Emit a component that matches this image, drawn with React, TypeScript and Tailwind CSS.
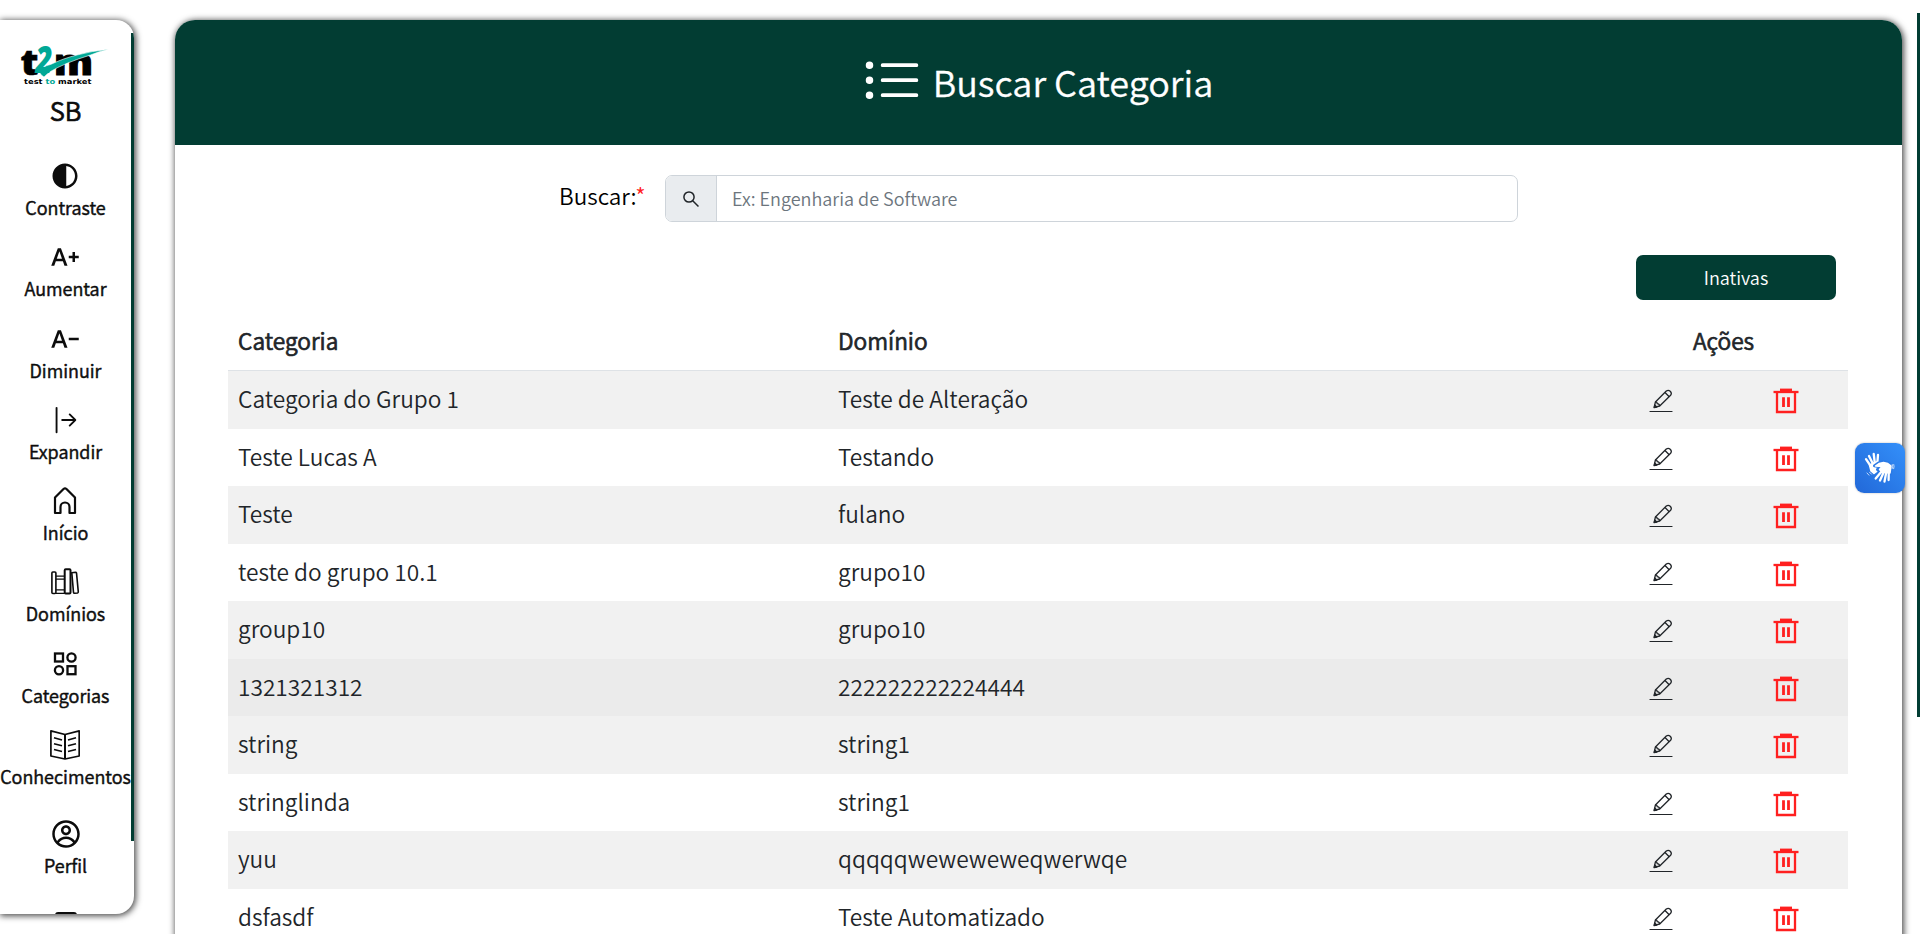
import type { ReactNode } from "react";
import { BsArrowBarRight, BsListUl } from "react-icons/bs";
import { MdContrast, MdTextDecrease, MdTextIncrease } from "react-icons/md";
import { CgProfile } from "react-icons/cg";

const rows: [string, string][] = [
  ["Categoria do Grupo 1", "Teste de Alteração"],
  ["Teste Lucas A", "Testando"],
  ["Teste", "fulano"],
  ["teste do grupo 10.1", "grupo10"],
  ["group10", "grupo10"],
  ["1321321312", "222222222224444"],
  ["string", "string1"],
  ["stringlinda", "string1"],
  ["yuu", "qqqqqweweweweqwerwqe"],
  ["dsfasdf", "Teste Automatizado"],
];

function Logo() {
  return (
    <svg width="92" height="42" viewBox="0 0 92 42" className="block overflow-visible">
      <text x="-0.500" y="29.500" fontFamily="Open Sans" fontWeight="800" fontSize="36" textLength="18" lengthAdjust="spacingAndGlyphs" fill="#000" stroke="#000" strokeWidth="0.6">t</text>
      <text x="33" y="29.500" fontFamily="Open Sans" fontWeight="800" fontSize="35" textLength="39" lengthAdjust="spacingAndGlyphs" fill="#000" stroke="#000" strokeWidth="1">m</text>
      <path d="M18.500 27.500 C21 23 24 20.500 29.500 19.500 C38 15.500 46 12.500 56 10 Q71 6 87.800 4.300 Q77 6.800 69.500 10 Q57 13.800 46 18.300 Q36 22.500 29.500 26.500 Q26 29 23 32 Q20.500 31 18.500 27.500Z" fill="#00a896" stroke="#fff" strokeWidth="0.600" />
      <text x="14.500" y="28" fontFamily="Open Sans" fontWeight="800" fontSize="37" fontStyle="italic" textLength="17" lengthAdjust="spacingAndGlyphs" fill="#00a896">2</text>
      <text x="3" y="39" fontFamily="DejaVu Sans" fontWeight="700" fontSize="7" textLength="67.500" lengthAdjust="spacingAndGlyphs" fill="#000">
        test <tspan fill="#00a896">to</tspan> market
      </text>
    </svg>
  );
}

function HomeIcon() {
  return (
    <svg width="30" height="30" viewBox="0 0 30 30" fill="none" stroke="currentColor" strokeWidth="2.200" strokeLinejoin="round">
      <path d="M5 11.500 L13.500 3 Q15 1.800 16.500 3 L25 11.500 V27 H19.500 V21 A4.500 4.500 0 0 0 10.500 21 V27 H5Z" />
    </svg>
  );
}

function BooksIcon() {
  return (
    <svg width="30" height="30" viewBox="0 0 30 30" fill="none" stroke="currentColor" strokeWidth="1.600">
      <rect x="1.900" y="5" width="4" height="21.500" rx="1" />
      <path d="M5.900 9.200H14.500M5.900 12.200H14.500M5.900 22.800H14.500M5.900 26.300H14.500" strokeWidth="1.300" />
      <rect x="14.700" y="2.200" width="5.800" height="24.300" rx="1" strokeWidth="2" />
      <path d="M21.800 5.800 L25.500 5.200 Q26.300 5.200 26.500 6 L28.300 24.800 Q28.300 25.800 27.500 26 L24.600 26.300 Q23.600 26.300 23.500 25.300Z" />
    </svg>
  );
}

function CategoriesIcon() {
  return (
    <svg width="30" height="30" viewBox="0 0 30 30" fill="none" stroke="currentColor" strokeWidth="2.300">
      <rect x="5" y="4.500" width="8" height="8" />
      <circle cx="21.500" cy="8.500" r="4.100" />
      <circle cx="9" cy="21.200" r="4.100" />
      <rect x="17.500" y="17.200" width="8" height="8" />
    </svg>
  );
}

function OpenBookIcon() {
  return (
    <svg width="30" height="30" viewBox="0 0 30 30" fill="none" stroke="currentColor" strokeWidth="1.700" strokeLinejoin="round">
      <path d="M15 4.500 L0.900 0.900 V26 L15 29 L29.200 26 V0.900Z" />
      <path d="M15 4.500V29" strokeWidth="2" />
      <path d="M4 7.700L12 10M4 13.700L12 15.800M4 19.500L12 21.500M26 7.700L18 10M26 13.700L18 15.800M26 19.500L18 21.500" />
    </svg>
  );
}

function EditIcon() {
  return (
    <svg width="24" height="24" viewBox="0 0 24 24" fill="none" stroke="currentColor" strokeWidth="1.300" strokeLinejoin="round">
      <path d="M1 22.500H23" strokeWidth="1.200" strokeLinecap="round" />
      <path d="M5.200 18.400 L6.400 13 L17.300 2 Q19.300 0.600 21.200 2.200 Q23.200 4.200 21.600 6.300 L10.700 17Z" />
      <path d="M16 3.500L20.200 7.700M6.400 13 Q8 12.800 8.200 14.700 Q10.300 14.700 10.700 17" />
      <path d="M5.700 16L7.800 18L5.200 18.600Z" fill="currentColor" />
    </svg>
  );
}

function TrashIcon() {
  return (
    <svg width="26" height="26" viewBox="0 0 26 26" fill="none" stroke="#ff2020" strokeWidth="2">
      <path d="M7 2H19" strokeWidth="2.800" />
      <path d="M0.500 4H25.500" strokeWidth="2.300" />
      <path d="M4 4V24H22V4" strokeWidth="2.300" />
      <path d="M10.500 9.300V19M15.500 9.300V19" strokeWidth="2.800" />
    </svg>
  );
}

function SearchIcon() {
  return (
    <svg width="18" height="18" viewBox="0 0 18 18" fill="none" stroke="#212529" strokeWidth="1.500">
      <circle cx="7" cy="7" r="5.100" />
      <path d="M10.700 10.700L16.500 16.500" />
    </svg>
  );
}

function SignHandsIcon() {
  return (
    <svg width="50" height="50" viewBox="0 0 50 50" fill="none" stroke="#fff" strokeLinecap="round" strokeLinejoin="round">
      <path d="M11 16.200L16 23.500M14 13L18 21M18.700 10.800L19.800 20M23 11.800L22.300 20.500" strokeWidth="2.300" />
      <path d="M14.500 22 L22.500 18.500 L24 22 L23 27.500 L19 30.500 L16 28Z" fill="#fff" strokeWidth="1.500" />
      <path d="M19.500 22.800 Q23 19.500 28 18.800 Q33 19 36.500 22.500 L35.500 31 L26 29.500 L22.500 26.500 L26 24Z" fill="#2b7ae6" stroke="#2b7ae6" strokeWidth="3" />
      <path d="M20.500 23 Q24 20 28.500 19.600 Q33 20 36 23 L35 30 L27 29 L24.500 26.500 L27 23.500Z" fill="#fff" strokeWidth="1.500" />
      <path d="M27 28L20.700 35.500M29 28.500L25 37.500M31.300 29L29.500 38.500M33.800 28.500L33.600 37" strokeWidth="2.300" />
      <path d="M37.300 21.500Q38 23.500 37.300 25.500M38.800 21.500Q39.500 23.500 38.700 25.700M12 30L14 32.200M14.500 29.200L16.500 31.200" strokeWidth="0.700" />
    </svg>
  );
}

const items: { label: string; icon: ReactNode }[] = [
  { label: "Contraste", icon: <MdContrast size={30} /> },
  { label: "Aumentar", icon: <MdTextIncrease size={30} /> },
  { label: "Diminuir", icon: <MdTextDecrease size={30} /> },
  { label: "Expandir", icon: <BsArrowBarRight size={30} /> },
  { label: "Início", icon: <HomeIcon /> },
  { label: "Domínios", icon: <BooksIcon /> },
  { label: "Categorias", icon: <CategoriesIcon /> },
  { label: "Conhecimentos", icon: <OpenBookIcon /> },
];

function SideItem({ label, icon }: { label: string; icon: ReactNode }) {
  return (
    <a className="flex h-[81.25px] shrink-0 flex-col items-center">
      {icon}
      <span className="text-[18px] leading-[32px] whitespace-nowrap [-webkit-text-stroke:0.5px_currentColor]">{label}</span>
    </a>
  );
}

export default function App() {
  return (
    <div className="relative flex h-[934px] w-full overflow-hidden bg-white font-['Noto_Sans_CJK_JP',sans-serif] font-[350] text-[#212529]">
      <aside className="mt-5 flex h-[894px] w-[134px] shrink-0 overflow-hidden rounded-r-[18px] bg-white text-[#0c0c0c] shadow-[1px_1px_6px_1px_rgba(0,0,0,0.7)]">
        <nav className="flex w-[131px] shrink-0 flex-col items-center pt-[25px]">
          <div className="ml-[2px] h-[42px]">
            <Logo />
          </div>
          <div className="mt-[3px] text-[25.5px] leading-[40px] [-webkit-text-stroke:0.7px_currentColor]">SB</div>
          <div className="mt-[31px] flex flex-col items-center">
            {items.map((item) => (
              <SideItem key={item.label} {...item} />
            ))}
          </div>
          <div className="mt-[8px]">
            <SideItem label="Perfil" icon={<CgProfile size={30} />} />
          </div>
          <div className="mt-[11.5px] h-[26px] w-[22px] shrink-0 rounded-[3px] border-[3px] border-[#0c0c0c]" />
        </nav>
        <div className="mt-[13px] h-[808px] w-[3px] shrink-0 bg-[#023d33]" />
      </aside>

      <main className="mt-5 ml-[41px] h-[1200px] w-[1727px] shrink-0 overflow-hidden rounded-[20px] bg-white shadow-[1px_1px_6px_1px_rgba(0,0,0,0.7)]">
        <header className="flex h-[125px] items-center justify-center bg-[#023d33] pr-[2px] text-white">
          <BsListUl size={60} className="mr-[11px] mb-[2px]" />
          <h1 className="mt-[-4px] text-[36px] leading-[50px] [-webkit-text-stroke:0.3px_currentColor]">Buscar Categoria</h1>
        </header>

        <div className="flex pt-[30px] pl-[384px]">
          <label className="w-[106px] shrink-0 text-[22.5px] leading-[41px] text-black">
            Buscar:<span className="text-[#ff2020]">*</span>
          </label>
          <div className="flex h-[47px] w-[853px] overflow-hidden rounded-[7px] border border-[#ced4da]">
            <div className="flex w-[51px] shrink-0 items-center justify-center border-r border-[#ced4da] bg-[#e9ecef]">
              <SearchIcon />
            </div>
            <input
              className="w-full bg-transparent px-[15px] text-[18px] outline-none placeholder:text-[#6c757d]"
              placeholder="Ex: Engenharia de Software"
            />
          </div>
        </div>

        <div className="mt-[33px] flex justify-end pr-[66px]">
          <button className="h-[45px] w-[200px] rounded-[7px] bg-[#023d33] text-[18px] text-white">Inativas</button>
        </div>

        <div className="mt-[12px] ml-[53px] w-[1620px] text-[22.7px]">
          <div className="grid h-[59px] grid-cols-[600px_772px_248px] border-b border-[#dee2e6] leading-[57px] [-webkit-text-stroke:0.7px_currentColor]">
            <div className="pl-[10px]">Categoria</div>
            <div className="pl-[10px]">Domínio</div>
            <div className="pr-px text-center">Ações</div>
          </div>
          {rows.map(([category, domain], i) => (
            <div
              key={category}
              className={`grid h-[57.5px] grid-cols-[600px_772px_124px_124px] leading-[55.5px] ${
                i === 5 ? "bg-[#ebebeb]" : i % 2 === 0 ? "bg-[#f1f1f1]" : "bg-white"
              }`}
            >
              <div className="pl-[10px]">{category}</div>
              <div className="pl-[10px]">{domain}</div>
              <div className="flex justify-center pt-[18px] pr-[2px]">
                <EditIcon />
              </div>
              <div className="flex justify-center pt-[17px]">
                <TrashIcon />
              </div>
            </div>
          ))}
        </div>
      </main>

      <div className="absolute top-[13px] right-0 h-[704px] w-[3px] bg-[#023d33]" />
      <div className="absolute top-[443px] right-[15px] h-[50px] w-[50px] rounded-[9px] bg-linear-to-tr from-[#2268d8] to-[#3490fa] shadow-[0_0_2px_rgba(0,0,0,0.3)]">
        <SignHandsIcon />
      </div>
    </div>
  );
}
